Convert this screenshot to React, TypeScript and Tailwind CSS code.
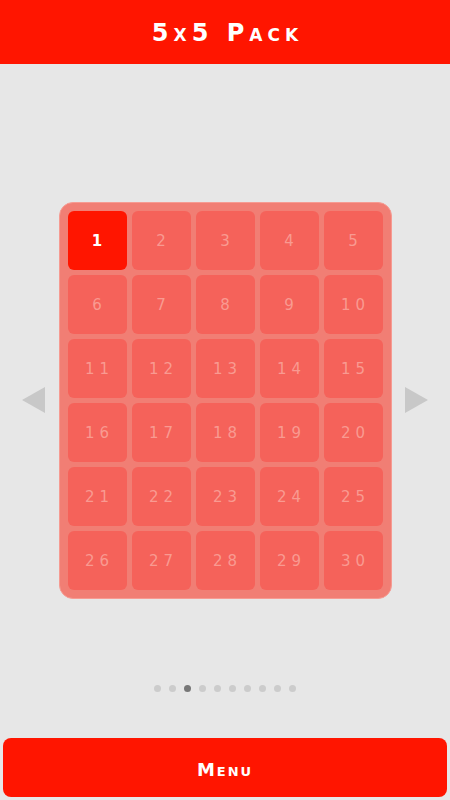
const levels = Array.from({ length: 30 }, (_, i) => i + 1)
const dots = Array.from({ length: 10 }, (_, i) => i)

const Triangle = ({ dir }: { dir: 'left' | 'right' }) => (
  <svg width="24" height="26" viewBox="0 0 24 26" className="shrink-0">
    {dir === 'left' ? (
      <polygon points="23,0 23,26 0,13" fill="#c8c8c8" />
    ) : (
      <polygon points="1,0 1,26 24,13" fill="#c8c8c8" />
    )}
  </svg>
)

export default function App() {
  return (
    <div
      className="w-[450px] h-[800px] bg-[#e7e7e7] flex flex-col overflow-hidden"
      style={{ fontFamily: '"DejaVu Sans", "Liberation Sans", sans-serif' }}
    >
      <header className="h-16 bg-[#ff1500] flex items-center justify-center shrink-0">
        <h1 className="text-white text-[24px] font-bold tracking-[5px] [font-variant:small-caps] pl-[5px] pt-[2px]">
          5x5 Pack
        </h1>
      </header>

      <div className="h-[616px] flex items-center justify-between px-[22px] pt-[56px] shrink-0">
        <Triangle dir="left" />
        <div className="w-[333px] bg-[#f17e74] border border-[#f69b92] rounded-[14px] p-[8px] grid grid-cols-5 gap-[5px]">
          {levels.map((n) => (
            <div
              key={n}
              className={`h-[59px] rounded-[6px] flex items-center justify-center text-[15px] tracking-[5px] pl-[5px] pt-[2px] ${
                n === 1
                  ? 'bg-[#ff1500] text-white font-bold'
                  : 'bg-[#f5625a] text-[#f99a91]'
              }`}
            >
              {n}
            </div>
          ))}
        </div>
        <Triangle dir="right" />
      </div>

      <div className="h-[58px] flex items-start justify-center gap-2 shrink-0 pt-[5px]">
        {dots.map((d) => (
          <span
            key={d}
            className={`w-[7px] h-[7px] rounded-full ${
              d === 2 ? 'bg-[#777777]' : 'bg-[#cccccc]'
            }`}
          />
        ))}
      </div>

      <div className="px-[3px] pb-[3px] shrink-0">
        <button className="w-full h-[59px] bg-[#ff1500] rounded-[8px] flex items-center justify-center text-white text-[18px] font-bold tracking-[2px] [font-variant:small-caps] pt-1">
          Menu
        </button>
      </div>
    </div>
  )
}
